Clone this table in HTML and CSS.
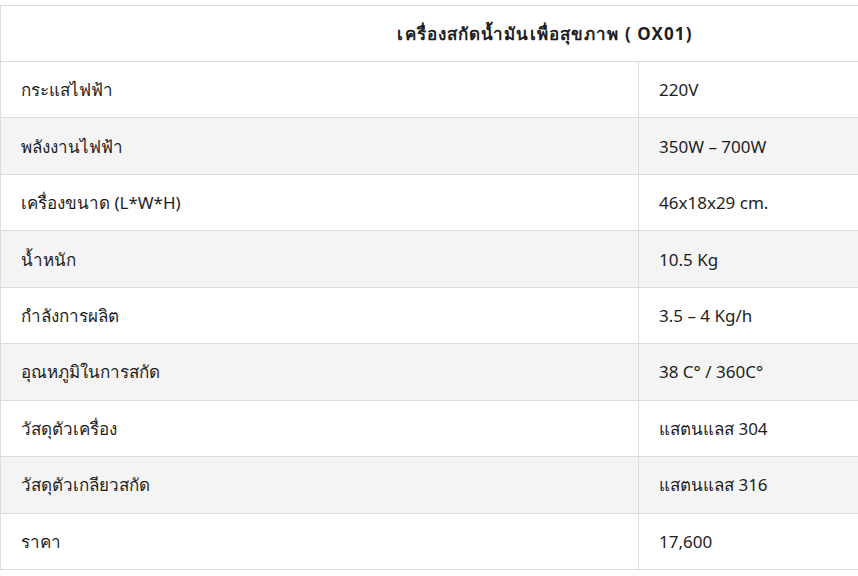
FILE: index.html
```html
<!DOCTYPE html>
<html lang="th">
<head>
<meta charset="utf-8">
<link rel="stylesheet" href="styles.css">
</head>
<body>
<table class="spec">
  <colgroup><col class="c1"><col class="c2"></colgroup>
  <thead>
    <tr><th colspan="2">เครื่องสกัดน้ำมันเพื่อสุขภาพ ( OX01)</th></tr>
  </thead>
  <tbody>
    <tr><td>กระแสไฟฟ้า</td><td>220V</td></tr>
    <tr><td>พลังงานไฟฟ้า</td><td>350W – 700W</td></tr>
    <tr><td>เครื่องขนาด (L*W*H)</td><td>46x18x29 cm.</td></tr>
    <tr><td>น้ำหนัก</td><td>10.5 Kg</td></tr>
    <tr><td>กำลังการผลิต</td><td>3.5 – 4 Kg/h</td></tr>
    <tr><td>อุณหภูมิในการสกัด</td><td>38 C° / 360C°</td></tr>
    <tr><td>วัสดุตัวเครื่อง</td><td>แสตนแลส 304</td></tr>
    <tr><td>วัสดุตัวเกลียวสกัด</td><td>แสตนแลส 316</td></tr>
    <tr><td>ราคา</td><td>17,600</td></tr>
  </tbody>
</table>
</body>
</html>
```
FILE: styles.css
```css
html, body {
  margin: 0;
  padding: 0;
  background: #fff;
  overflow: hidden;
}
body {
  padding-top: 5px;
  font-family: "Noto Sans", "Open Sans", sans-serif;
  font-size: 17px;
  color: #1e1e1e;
}
.spec {
  border-collapse: collapse;
  width: 1090px;
  table-layout: fixed;
}
.spec .c1 { width: 638px; }
.spec th, .spec td {
  border: 1px solid #dcdcdc;
  padding: 0 20px;
  text-align: left;
  vertical-align: middle;
}
.spec thead tr { height: 56px; }
.spec tbody tr { height: 56.45px; }
.spec th {
  font-weight: 700;
  text-align: center;
  letter-spacing: 1.1px;
}
.spec tbody tr:nth-child(even) td {
  background: #f4f4f4;
}
```
